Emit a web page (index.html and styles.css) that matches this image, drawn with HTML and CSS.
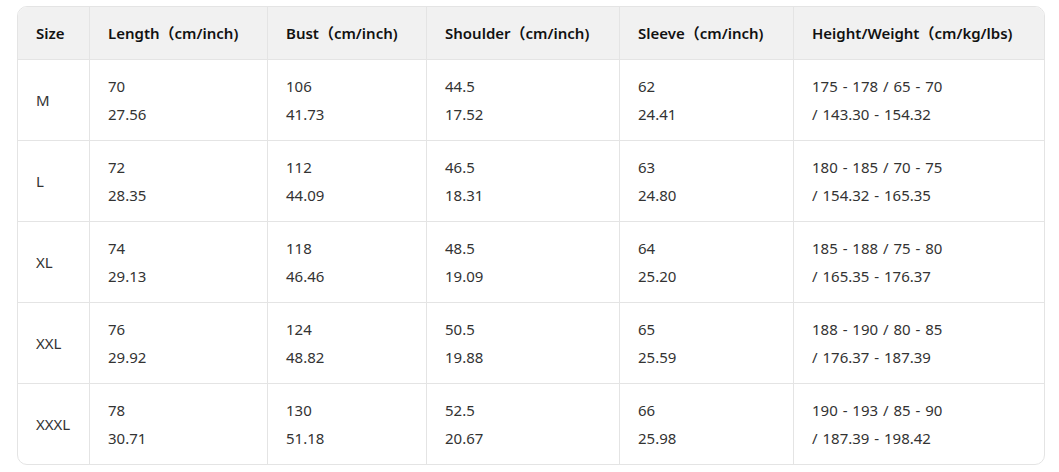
FILE: index.html
```html
<!DOCTYPE html>
<html>
<head>
<meta charset="utf-8">
<link rel="stylesheet" href="styles.css">
</head>
<body>
<div class="wrap">
<table class="size-table">
  <colgroup>
    <col class="c1"><col class="c2"><col class="c3"><col class="c4"><col class="c5"><col class="c6">
  </colgroup>
  <thead>
    <tr>
      <th>Size</th>
      <th>Length（cm/inch)</th>
      <th>Bust（cm/inch)</th>
      <th>Shoulder（cm/inch)</th>
      <th>Sleeve（cm/inch)</th>
      <th>Height/Weight（cm/kg/lbs)</th>
    </tr>
  </thead>
  <tbody>
    <tr>
      <td>M</td>
      <td>70<br>27.56</td>
      <td>106<br>41.73</td>
      <td>44.5<br>17.52</td>
      <td>62<br>24.41</td>
      <td>175 - 178 / 65 - 70<br>/ 143.30 - 154.32</td>
    </tr>
    <tr>
      <td>L</td>
      <td>72<br>28.35</td>
      <td>112<br>44.09</td>
      <td>46.5<br>18.31</td>
      <td>63<br>24.80</td>
      <td>180 - 185 / 70 - 75<br>/ 154.32 - 165.35</td>
    </tr>
    <tr>
      <td>XL</td>
      <td>74<br>29.13</td>
      <td>118<br>46.46</td>
      <td>48.5<br>19.09</td>
      <td>64<br>25.20</td>
      <td>185 - 188 / 75 - 80<br>/ 165.35 - 176.37</td>
    </tr>
    <tr>
      <td>XXL</td>
      <td>76<br>29.92</td>
      <td>124<br>48.82</td>
      <td>50.5<br>19.88</td>
      <td>65<br>25.59</td>
      <td>188 - 190 / 80 - 85<br>/ 176.37 - 187.39</td>
    </tr>
    <tr>
      <td>XXXL</td>
      <td>78<br>30.71</td>
      <td>130<br>51.18</td>
      <td>52.5<br>20.67</td>
      <td>66<br>25.98</td>
      <td>190 - 193 / 85 - 90<br>/ 187.39 - 198.42</td>
    </tr>
  </tbody>
</table>
</div>
</body>
</html>
```
FILE: styles.css
```css
html, body {
  margin: 0;
  padding: 0;
  background: #ffffff;
}
.wrap {
  padding: 6px 16px 0 17px;
}
.size-table {
  width: 1026px;
  table-layout: fixed;
  border-collapse: separate;
  border-spacing: 0;
  border: 1px solid #e4e4e4;
  border-radius: 10px;
  overflow: hidden;
  font-family: "Noto Sans", "Noto Sans CJK SC", sans-serif;
  font-size: 15px;
  color: #333333;
}
.c1 { width: 72px; }
.c2 { width: 178px; }
.c3 { width: 159px; }
.c4 { width: 193px; }
.c5 { width: 174px; }
.c6 { width: 250px; }
.size-table th,
.size-table td {
  text-align: left;
  vertical-align: middle;
  padding: 12px 17px 12px 18px;
  line-height: 28px;
  border-right: 1px solid #e4e4e4;
  border-bottom: 1px solid #e4e4e4;
}
.size-table th {
  background: #f1f1f1;
  color: #111111;
  font-weight: 600;
}
.size-table td {
  word-spacing: 1px;
}
.size-table th:last-child,
.size-table td:last-child {
  border-right: none;
}
.size-table tbody tr:last-child td {
  border-bottom: none;
}
```
